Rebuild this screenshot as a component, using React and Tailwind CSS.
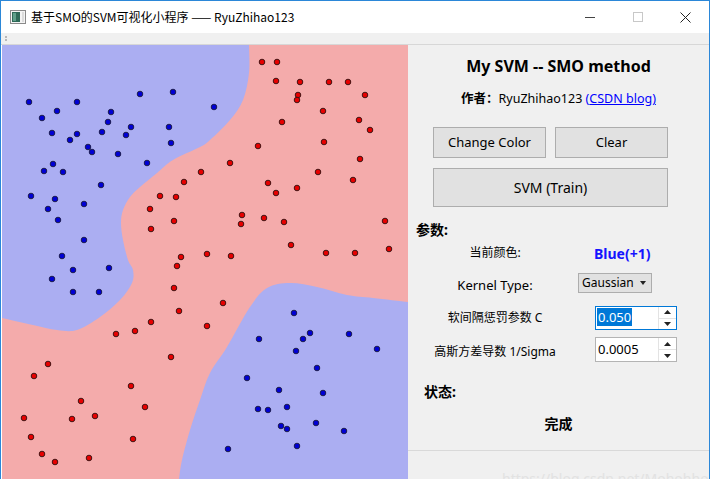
import React from 'react';

const BLUE_PTS = [
  [29, 102], [77, 102], [140, 94], [173, 92], [57, 111], [111, 112], [42, 118], [108, 122],
  [131, 127], [169, 127], [52, 133], [77, 134], [102, 132], [126, 135], [70, 140], [171, 143],
  [88, 147], [92, 152], [118, 154], [53, 164], [147, 163], [44, 171], [63, 172], [101, 185],
  [31, 196], [55, 199], [84, 204], [48, 209], [58, 220], [84, 240], [62, 256], [214, 107],
  [73, 270], [109, 268], [52, 279], [73, 292], [99, 292],
  [294, 313], [310, 333], [349, 334], [259, 339], [303, 339], [377, 349], [296, 351],
  [317, 368], [247, 378], [279, 390], [323, 393], [258, 409], [268, 410], [287, 407],
  [316, 423], [281, 426], [287, 429], [344, 431], [297, 446], [228, 449],
];

const RED_PTS = [
  [201, 172], [184, 182], [160, 196], [176, 197], [150, 209], [174, 221], [151, 229], [181, 257],
  [207, 254], [262, 62], [277, 62], [276, 81], [300, 82], [329, 82], [348, 82], [298, 95],
  [297, 100], [365, 95], [323, 111], [359, 120], [282, 122], [370, 130], [258, 146], [324, 142],
  [230, 163], [360, 159], [318, 172], [353, 180], [268, 183], [297, 188], [276, 193], [242, 215],
  [241, 224], [264, 218], [284, 222], [385, 221], [291, 245], [231, 256], [326, 253], [355, 253],
  [389, 249], [177, 266], [174, 288], [179, 311], [151, 322], [135, 331], [116, 334], [207, 326],
  [48, 364], [171, 357], [34, 376], [131, 386], [81, 401], [145, 407], [24, 418], [95, 416],
  [72, 419], [133, 439], [31, 437], [42, 454], [89, 458], [55, 462], [223, 303],
];

const TOP_LEFT = [
  [249, 45], [249, 73], [243, 100], [230, 120], [210, 140], [200, 147], [173, 160], [157, 173],
  [140, 187], [130, 197], [123, 210], [121, 223], [123, 240], [128, 260], [133, 270], [132, 283],
  [120, 300], [100, 317], [77, 330], [57, 330], [33, 325], [2, 318],
];

const BOTTOM_RIGHT = [
  [408, 302], [373, 298], [347, 295], [317, 287], [290, 283], [267, 288], [250, 307], [227, 347],
  [210, 373], [200, 400], [190, 430], [182, 460], [179, 479],
];

// catmull-rom through the traced boundary points
const smooth = (pts) => {
  let d = `M${pts[0][0]},${pts[0][1]}`;
  for (let i = 0; i < pts.length - 1; i++) {
    const p0 = pts[i - 1] || pts[i];
    const p1 = pts[i];
    const p2 = pts[i + 1];
    const p3 = pts[i + 2] || p2;
    const c1x = p1[0] + (p2[0] - p0[0]) / 6;
    const c1y = p1[1] + (p2[1] - p0[1]) / 6;
    const c2x = p2[0] - (p3[0] - p1[0]) / 6;
    const c2y = p2[1] - (p3[1] - p1[1]) / 6;
    d += ` C${c1x},${c1y} ${c2x},${c2y} ${p2[0]},${p2[1]}`;
  }
  return d;
};

const Canvas = () => (
  <svg className="block w-[406px] h-[434px]" viewBox="2 45 406 434">
    <rect x="2" y="45" width="406" height="434" fill="#f4abab" />
    <path d={`${smooth(TOP_LEFT)} L2,45 Z`} fill="#abaef2" />
    <path d={`${smooth(BOTTOM_RIGHT)} L408,479 Z`} fill="#abaef2" />
    {BLUE_PTS.map(([x, y], i) => (
      <circle key={`b${i}`} cx={x} cy={y} r="2.8" fill="#0000d4" stroke="#1a1a40" strokeWidth="0.9" />
    ))}
    {RED_PTS.map(([x, y], i) => (
      <circle key={`r${i}`} cx={x} cy={y} r="2.8" fill="#e60000" stroke="#301010" strokeWidth="0.9" />
    ))}
  </svg>
);

const SpinArrows = () => (
  <div className="w-[18px] h-full flex flex-col border-l border-[#e3e3e3]">
    <div className="flex-1 flex items-center justify-center border-b border-[#e3e3e3]">
      <svg width="7" height="4" viewBox="0 0 7 4"><path d="M3.5 0 L7 4 L0 4 Z" fill="#222" /></svg>
    </div>
    <div className="flex-1 flex items-center justify-center">
      <svg width="7" height="4" viewBox="0 0 7 4"><path d="M0 0 L7 0 L3.5 4 Z" fill="#222" /></svg>
    </div>
  </div>
);

const Panel = () => (
  <div className="w-[301px] min-w-0 overflow-hidden flex flex-col bg-[#f0f0f0] text-black">
    <div className="mt-[11px] h-[20px] leading-[20px] text-center text-[16px] font-bold">My SVM -- SMO method</div>
    <div className="mt-[15px] h-[16px] leading-[16px] text-center text-[12.5px]">
      <span className="font-bold">作者：</span>RyuZhihao123 <span className="text-[#0000ff]">(<span className="underline">CSDN blog)</span></span>
    </div>

    <div className="mt-[20px] ml-[25px] flex gap-[9px]">
      <button className="w-[113px] h-[31px] bg-[#e1e1e1] border border-[#adadad] text-[13px]">Change Color</button>
      <button className="w-[113px] h-[31px] bg-[#e1e1e1] border border-[#adadad] text-[13px]">Clear</button>
    </div>
    <button className="mt-[10px] ml-[25px] w-[235px] h-[39px] bg-[#e1e1e1] border border-[#adadad] text-[14px]">SVM (Train)</button>

    <div className="mt-[14px] ml-[8px] h-[18px] leading-[18px] text-[14px] font-bold">参数:</div>

    <div className="mt-[4px] h-[20px] flex items-center">
      <div className="ml-[25px] w-[124px] text-center text-[12px]">当前颜色:</div>
      <div className="ml-[37px] text-[14px] font-bold text-[#1414ff]">Blue(+1)</div>
    </div>

    <div className="mt-[10px] h-[20px] flex items-center">
      <div className="ml-[25px] w-[124px] text-center text-[13px] pt-[6px]">Kernel Type:</div>
      <div className="ml-[21px] w-[74px] h-[20px] bg-[#e1e1e1] border border-[#adadad] flex items-center pl-[3px] pr-[5px] text-[12px]">
        <span className="flex-1">Gaussian</span>
        <svg width="6" height="4" viewBox="0 0 6 4"><path d="M0 0 L6 0 L3 4 Z" fill="#222" /></svg>
      </div>
    </div>

    <div className="mt-[13px] h-[24px] flex items-center">
      <div className="ml-[25px] w-[124px] text-center text-[12px]">软间隔惩罚参数 C</div>
      <div className="ml-[38px] w-[82px] h-[24px] bg-white border border-[#0078d7] flex items-center">
        <div className="flex-1 pl-[1px] text-[13px]">
          <span className="bg-[#0078d7] text-white px-[1px]">0.050</span>
        </div>
        <SpinArrows />
      </div>
    </div>

    <div className="mt-[7px] h-[25px] flex items-center">
      <div className="ml-[25px] w-[124px] text-center text-[12px] pt-[5px]">高斯方差导数 1/Sigma</div>
      <div className="ml-[38px] w-[82px] h-[25px] bg-white border border-[#b4b4b4] flex items-center">
        <div className="flex-1 pl-[2px] text-[13px]">0.0005</div>
        <SpinArrows />
      </div>
    </div>

    <div className="mt-[21px] ml-[16px] h-[18px] leading-[18px] text-[14px] font-bold">状态:</div>
    <div className="mt-[14px] h-[18px] leading-[18px] text-center text-[14px] font-bold">完成</div>

    <div className="mt-[17px] flex-1 min-h-0 border-t border-[#d9d9d9] overflow-hidden">
      <div className="mt-[20px] ml-[94px] text-[14px] leading-[16px] text-[#e2e2e2] whitespace-nowrap">https://blog.csdn.net/Mohohhomtz</div>
    </div>
  </div>
);

export default function App() {
  return (
    <div className="w-[713px] h-[479px] bg-white overflow-hidden" style={{ fontFamily: '"Noto Sans", "Noto Sans CJK SC", sans-serif' }}>
      <div className="w-[710px] h-[479px] flex flex-col border-l border-t border-r border-[#2b87d8]">
        {/* title bar */}
        <div className="h-[32px] shrink-0 flex items-center bg-white">
          <svg className="ml-[9px]" width="16" height="14" viewBox="0 0 16 14">
            <rect x="0.5" y="0.5" width="15" height="13" fill="#f4f4f4" stroke="#8a8a8a" />
            <rect x="2" y="2" width="8" height="10" fill="#2e6a58" />
            <rect x="3" y="3" width="3" height="8" fill="#5fa08a" />
            <rect x="12" y="2" width="2" height="10" fill="#dcdcdc" />
          </svg>
          <div className="ml-[5px] text-[12px] leading-[14px]" style={{ fontFamily: '"Noto Sans CJK SC", sans-serif' }}>基于SMO的SVM可视化小程序 —— RyuZhihao123</div>
          <div className="flex-1" />
          <div className="w-[10px] h-px bg-[#444] mr-[38px]" />
          <div className="w-[10px] h-[10px] border border-[#c8c8c8] mr-[37px]" />
          <svg className="mr-[18px]" width="11" height="11" viewBox="0 0 11 11">
            <path d="M0.5 0.5 L10.5 10.5 M10.5 0.5 L0.5 10.5" stroke="#222" strokeWidth="1" />
          </svg>
        </div>
        {/* toolbar strip */}
        <div className="h-[12px] shrink-0 bg-[#f0f0f0] border-b border-[#d7d7d7] flex items-center">
          <div className="ml-[4px] flex flex-col gap-[1px]">
            <div className="w-[2px] h-[2px] bg-[#b8b8b8]" />
            <div className="w-[2px] h-[2px] bg-[#b8b8b8]" />
          </div>
        </div>
        <div className="flex-1 min-h-0 flex">
          <div className="ml-[1px] shrink-0"><Canvas /></div>
          <Panel />
        </div>
      </div>
    </div>
  );
}
